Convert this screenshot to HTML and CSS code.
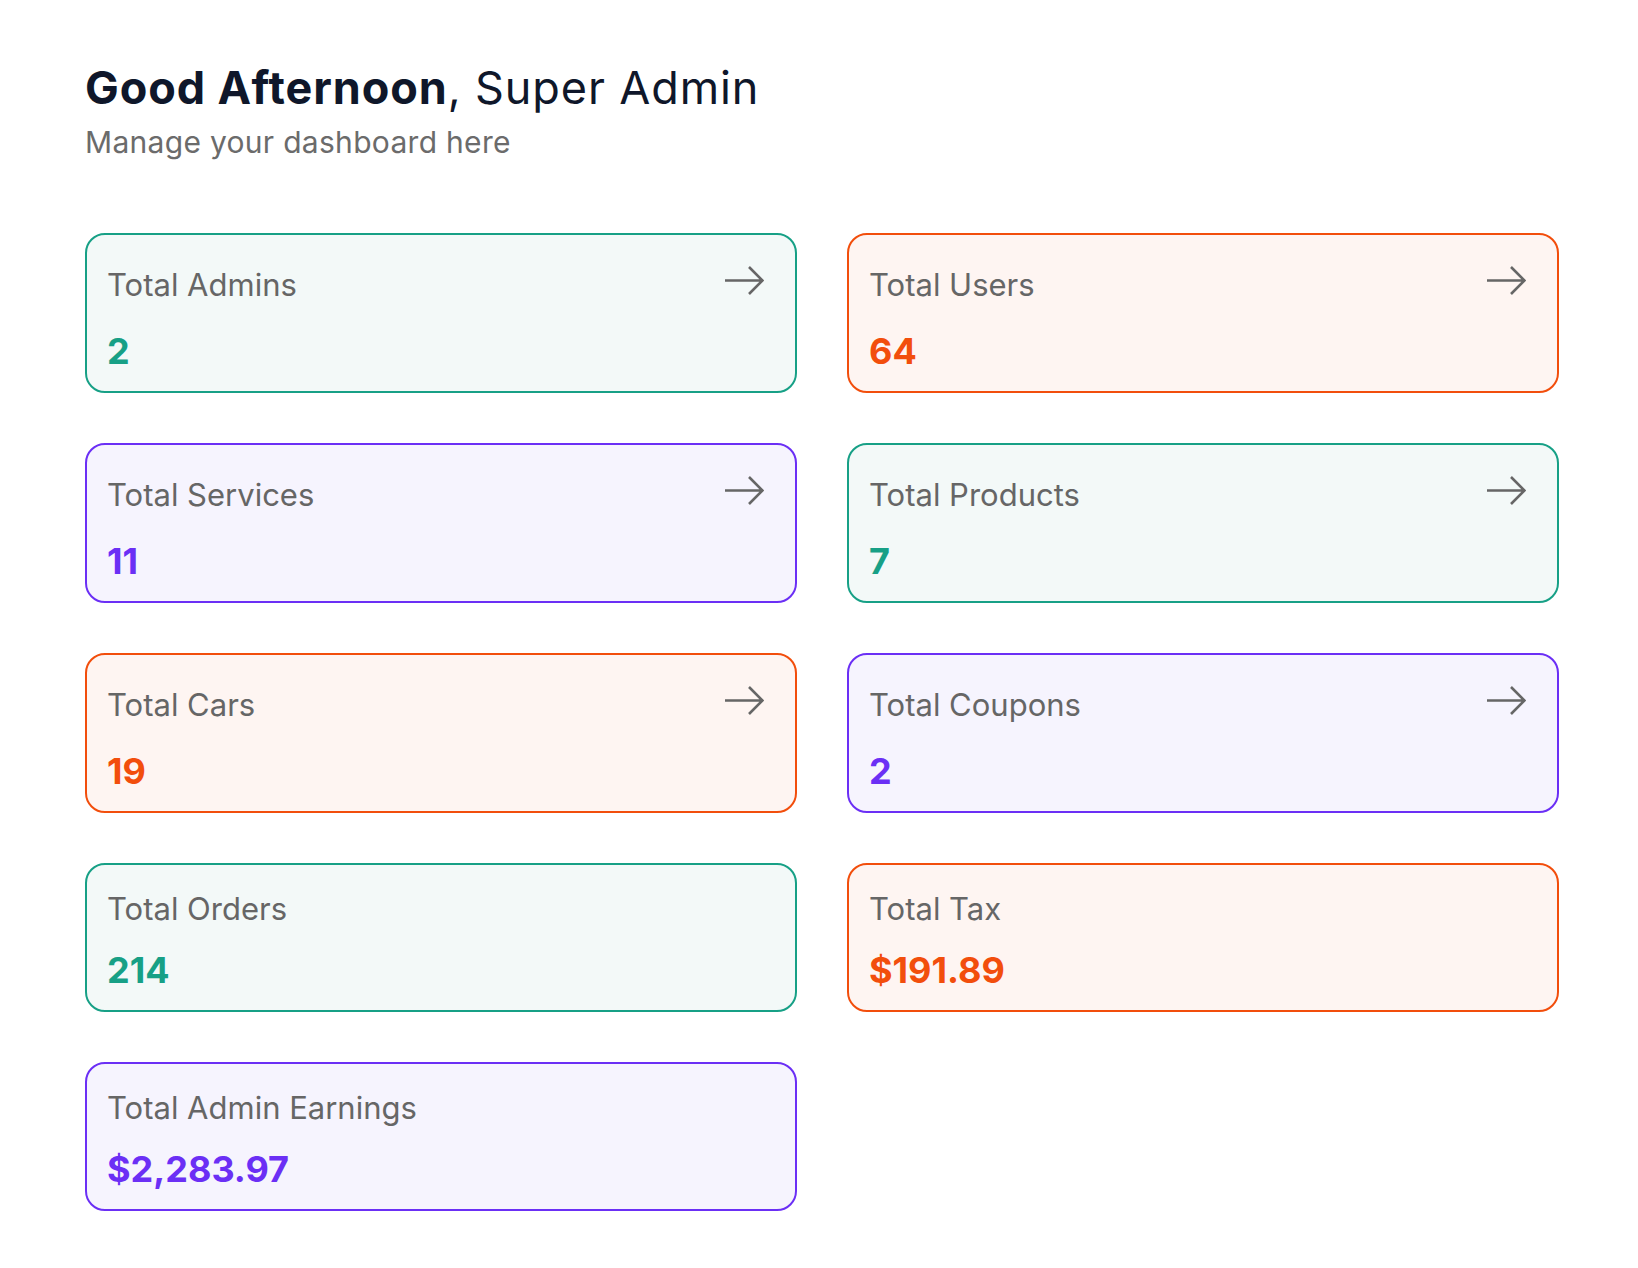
FILE: index.html
```html
<!DOCTYPE HTML>
<html lang="en">
<head>
    <title>Dashboard</title>
    <link rel="stylesheet" href="styles.css">
</head>
<body>
    <div class="page">
        <div class="greeting">
            <h1><strong>Good Afternoon</strong>, Super Admin</h1>
            <p>Manage your dashboard here</p>
        </div>

        <div class="stats">
            <div class="card teal">
                <div class="card-head">
                    <span class="card-label">Total Admins</span>
                    <a href="#" class="card-link"><svg width="40" height="31" viewBox="0 0 40 31"><path d="M1 15.5H38.5M25 2L38.5 15.5L25 29"/></svg></a>
                </div>
                <div class="card-value">2</div>
            </div>
            <div class="card orange">
                <div class="card-head">
                    <span class="card-label">Total Users</span>
                    <a href="#" class="card-link"><svg width="40" height="31" viewBox="0 0 40 31"><path d="M1 15.5H38.5M25 2L38.5 15.5L25 29"/></svg></a>
                </div>
                <div class="card-value">64</div>
            </div>
            <div class="card purple">
                <div class="card-head">
                    <span class="card-label">Total Services</span>
                    <a href="#" class="card-link"><svg width="40" height="31" viewBox="0 0 40 31"><path d="M1 15.5H38.5M25 2L38.5 15.5L25 29"/></svg></a>
                </div>
                <div class="card-value">11</div>
            </div>
            <div class="card teal">
                <div class="card-head">
                    <span class="card-label">Total Products</span>
                    <a href="#" class="card-link"><svg width="40" height="31" viewBox="0 0 40 31"><path d="M1 15.5H38.5M25 2L38.5 15.5L25 29"/></svg></a>
                </div>
                <div class="card-value">7</div>
            </div>
            <div class="card orange">
                <div class="card-head">
                    <span class="card-label">Total Cars</span>
                    <a href="#" class="card-link"><svg width="40" height="31" viewBox="0 0 40 31"><path d="M1 15.5H38.5M25 2L38.5 15.5L25 29"/></svg></a>
                </div>
                <div class="card-value">19</div>
            </div>
            <div class="card purple">
                <div class="card-head">
                    <span class="card-label">Total Coupons</span>
                    <a href="#" class="card-link"><svg width="40" height="31" viewBox="0 0 40 31"><path d="M1 15.5H38.5M25 2L38.5 15.5L25 29"/></svg></a>
                </div>
                <div class="card-value">2</div>
            </div>
            <div class="card teal">
                <div class="card-head">
                    <span class="card-label">Total Orders</span>
                </div>
                <div class="card-value">214</div>
            </div>
            <div class="card orange">
                <div class="card-head">
                    <span class="card-label">Total Tax</span>
                </div>
                <div class="card-value">$191.89</div>
            </div>
            <div class="card purple">
                <div class="card-head">
                    <span class="card-label">Total Admin Earnings</span>
                </div>
                <div class="card-value">$2,283.97</div>
            </div>
        </div>
    </div>
</body>
</html>
```

FILE: styles.css
```css
body {
    font-family: Inter, "Noto Sans", sans-serif;
    background-color: #ffffff;
    color: #0f172a;
    margin: 0;
}
.page {
    padding: 61px 79px 40px 85px;
}
.greeting h1 {
    margin: 0;
    font-size: 45px;
    line-height: 54px;
    font-weight: 400;
    letter-spacing: 0.9px;
    color: #0f172a;
}
.greeting h1 strong {
    font-weight: 700;
}
.greeting p {
    margin: 8px 0 0;
    font-size: 30px;
    line-height: 38px;
    letter-spacing: 0.3px;
    color: #6b6b6b;
}
.stats {
    display: grid;
    grid-template-columns: 1fr 1fr;
    gap: 50px;
    margin-top: 72px;
}
.card {
    border: 2px solid;
    border-radius: 20px;
    padding: 22px 20px 18px;
}
.card-head {
    display: flex;
    align-items: center;
    justify-content: space-between;
}
.card-label {
    font-size: 31px;
    line-height: 44px;
    color: #666666;
}
.card-link {
    display: flex;
    padding: 8px 11px 16px;
}
.card-link svg {
    fill: none;
    stroke: #666666;
    stroke-width: 2.6;
}
.card-value {
    margin-top: 17px;
    font-size: 36px;
    line-height: 44px;
    font-weight: 700;
}
.teal {
    border-color: #17a086;
    background-color: #f3f9f8;
    color: #17a086;
}
.orange {
    border-color: #f24e0c;
    background-color: #fef5f2;
    color: #f24e0c;
}
.purple {
    border-color: #6b2ff5;
    background-color: #f6f4fe;
    color: #6b2ff5;
}
```
